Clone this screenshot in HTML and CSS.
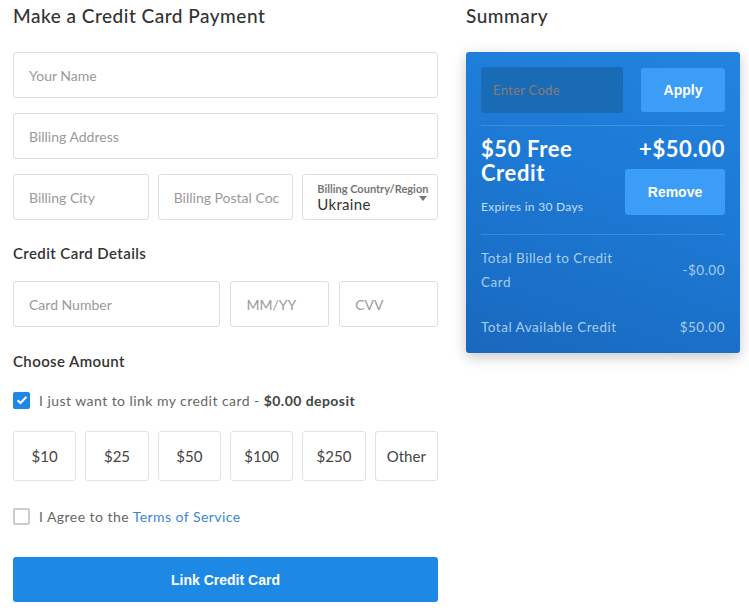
FILE: index.html
```html
<!DOCTYPE html>
<html>
<head>
<meta charset="utf-8">
<link rel="stylesheet" href="styles.css">
</head>
<body>
<div class="page">
  <div class="main">
    <h1 class="title">Make a Credit Card Payment</h1>
    <div class="field"><span class="ph">Your Name</span></div>
    <div class="field"><span class="ph">Billing Address</span></div>
    <div class="row three">
      <div class="field"><span class="ph">Billing City</span></div>
      <div class="field"><span class="ph">Billing Postal Coc</span></div>
      <div class="field select">
        <span class="sel-label">Billing Country/Region</span>
        <span class="sel-value">Ukraine</span>
        <span class="caret"></span>
      </div>
    </div>
    <h2 class="sub">Credit Card Details</h2>
    <div class="row card">
      <div class="field"><span class="ph">Card Number</span></div>
      <div class="field"><span class="ph">MM/YY</span></div>
      <div class="field"><span class="ph">CVV</span></div>
    </div>
    <h2 class="sub amount-h">Choose Amount</h2>
    <div class="check-row">
      <span class="box checked"><svg width="12" height="10" viewBox="0 0 12 10"><path d="M1.5 5.2 L4.5 8 L10.5 1.8" fill="none" stroke="#fff" stroke-width="2"/></svg></span>
      <span class="check-text">I just want to link my credit card - <b>$0.00 deposit</b></span>
    </div>
    <div class="amounts">
      <div class="amt">$10</div>
      <div class="amt">$25</div>
      <div class="amt">$50</div>
      <div class="amt">$100</div>
      <div class="amt">$250</div>
      <div class="amt">Other</div>
    </div>
    <div class="check-row agree">
      <span class="box"></span>
      <span class="check-text">I Agree to the <a class="link">Terms of Service</a></span>
    </div>
    <div class="submit">Link Credit Card</div>
  </div>
  <div class="side">
    <h1 class="title">Summary</h1>
    <div class="summary">
      <div class="code-row">
        <div class="code-input">Enter Code</div>
        <div class="btn-light apply">Apply</div>
      </div>
      <div class="credit">
        <div class="credit-left">
          <div class="credit-title">$50 Free Credit</div>
          <div class="expires">Expires in 30 Days</div>
        </div>
        <div class="credit-right">
          <div class="credit-amt">+$50.00</div>
          <div class="btn-light remove">Remove</div>
        </div>
      </div>
      <div class="totals">
        <div class="total-row billed">
          <span class="t-label">Total Billed to Credit Card</span>
          <span class="t-val">-$0.00</span>
        </div>
        <div class="total-row avail">
          <span class="t-label">Total Available Credit</span>
          <span class="t-val">$50.00</span>
        </div>
      </div>
    </div>
  </div>
</div>
</body>
</html>
```
FILE: styles.css
```css
* { box-sizing: border-box; }
html, body { margin: 0; padding: 0; background: #fff; }
body { font-family: "Lato", "Open Sans", sans-serif; color: #333; }
.page { display: flex; padding: 0 0 0 13px; gap: 28px; }
.main { width: 425px; display: flex; flex-direction: column; }
.side { width: 274px; }
.title { font-size: 19px; font-weight: 500; margin: 4px 0 0; height: 23px; line-height: 23px; color: #333; letter-spacing: 0.5px; }
.field { height: 46px; border: 1px solid #dedede; border-radius: 3px; display: flex; align-items: center; padding: 0 15px; margin-top: 15px; position: relative; overflow: hidden; }
.main > .title + .field { margin-top: 25px; }
.ph { color: #9a9a9a; font-size: 14px; white-space: nowrap; }
.row { display: flex; gap: 9px; margin-top: 15px; }
.row .field { margin-top: 0; }
.three { display: grid; grid-template-columns: repeat(3, minmax(0, 1fr)); gap: 9px; }
.select { flex-direction: column; align-items: flex-start; justify-content: center; padding: 0 2px 0 14px; }
.sel-label { font-size: 11px; color: #777; font-weight: 700; line-height: 13px; white-space: nowrap; }
.sel-value { font-size: 15px; color: #333; line-height: 18px; letter-spacing: 0.3px; }
.caret { position: absolute; right: 10px; top: 21px; border-left: 4px solid transparent; border-right: 4px solid transparent; border-top: 5px solid #777; }
.sub { font-size: 15px; font-weight: 600; margin: 24px 0 0; height: 18px; line-height: 18px; color: #333; letter-spacing: 0.4px; }
.card { margin-top: 19px; }
.card .field:nth-child(1) { width: 208px; }
.card .field:nth-child(2) { width: 99px; margin-left: 1px; }
.card .field:nth-child(3) { width: 99px; margin-left: 1px; }
.amount-h { margin-top: 25px; }
.check-row { display: flex; align-items: center; margin-top: 21px; height: 18px; }
.box { width: 17px; height: 17px; border: 2px solid #ccc; border-radius: 2px; display: flex; align-items: center; justify-content: center; margin-right: 9px; flex: none; }
.box.checked { background: #1e88e5; border-color: #1e88e5; }
.check-text { font-size: 14px; color: #666; letter-spacing: 0.45px; }
.check-text b { color: #444; font-weight: 700; }
.amounts { display: grid; grid-template-columns: repeat(6, minmax(0, 1fr)); gap: 9px; margin-top: 22px; }
.amt { height: 50px; border: 1px solid #e2e2e2; border-radius: 3px; display: flex; align-items: center; justify-content: center; font-size: 15px; color: #444; }
.agree { margin-top: 26px; }
.link { color: #3a86d8; }
.submit { margin-top: 32px; height: 45px; background: #1e88e5; border-radius: 3px; color: #fff; font-family: "Liberation Sans", Arial, sans-serif; font-weight: 700; font-size: 14px; display: flex; align-items: center; justify-content: center; }
.summary { margin-top: 25px; height: 301px; border-radius: 3px; background: linear-gradient(200deg, #2184e0 0%, #1c78d3 50%, #1968bd 100%); box-shadow: 0 4px 14px rgba(0,0,0,0.22); padding: 15px 15px 0; color: #fff; }
.code-row { display: flex; justify-content: space-between; padding-bottom: 12px; border-bottom: 1px solid rgba(255,255,255,0.15); }
.code-input { width: 142px; height: 46px; background: #1a6bb6; border-radius: 3px; display: flex; align-items: center; padding: 0 12px; font-size: 13px; color: #8a7a70; letter-spacing: 0.3px; }
.btn-light { background: #3b9df5; border-radius: 3px; color: #fff; font-family: "Liberation Sans", Arial, sans-serif; font-weight: 700; font-size: 14px; display: flex; align-items: center; justify-content: center; }
.apply { width: 84px; height: 44px; margin-top: 1px; }
.credit { display: flex; justify-content: space-between; padding: 11px 0 19px; border-bottom: 1px solid rgba(255,255,255,0.15); }
.credit-title { font-size: 22px; font-weight: 700; line-height: 24px; width: 130px; letter-spacing: 0.6px; }
.expires { font-size: 12px; color: #c6ddf5; margin-top: 14px; letter-spacing: 0.3px; }
.credit-right { display: flex; flex-direction: column; align-items: flex-end; }
.credit-amt { font-size: 22px; font-weight: 700; line-height: 24px; letter-spacing: 0.6px; }
.remove { width: 100px; height: 46px; margin-top: 8px; }
.totals { padding-top: 11px; }
.total-row { display: flex; justify-content: space-between; align-items: center; font-size: 13.5px; color: #a9cbee; line-height: 24px; letter-spacing: 0.5px; }
.billed .t-label { width: 140px; }
.avail { margin-top: 21px; }
```
